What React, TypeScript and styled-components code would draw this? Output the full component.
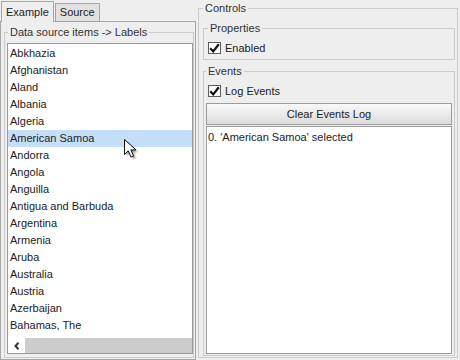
import styled, { createGlobalStyle } from "styled-components";

const countries = [
  "Abkhazia",
  "Afghanistan",
  "Aland",
  "Albania",
  "Algeria",
  "American Samoa",
  "Andorra",
  "Angola",
  "Anguilla",
  "Antigua and Barbuda",
  "Argentina",
  "Armenia",
  "Aruba",
  "Australia",
  "Austria",
  "Azerbaijan",
  "Bahamas, The",
];

const selected = "American Samoa";

const Check = () => (
  <Box>
    <svg width="11" height="10" viewBox="0 0 11 10">
      <path d="M1.2 5.2 L4.2 8.4 L9.8 1.2" fill="none" stroke="#111" strokeWidth="2.2" />
    </svg>
  </Box>
);

const App = () => {
  return (
    <>
      <GlobalStyle />
      <Frame>
        <LeftPane>
          <TabBar>
            <Tab $active>Example</Tab>
            <Tab>Source</Tab>
          </TabBar>
          <Panel>
            <Group $pad="4px 0 3px 2px" $grow>
              <Legend $shift={1}>Data source items -&gt; Labels</Legend>
              <List>
                <Rows>
                  {countries.map((c) => (
                    <Row key={c} $selected={c === selected}>
                      {c}
                    </Row>
                  ))}
                </Rows>
                <HScroll>
                  <ArrowButton>
                    <svg width="6" height="8" viewBox="0 0 6 8">
                      <path d="M4.5 0.8 L1.5 4 L4.5 7.2" fill="none" stroke="#333" strokeWidth="2" />
                    </svg>
                  </ArrowButton>
                  <Thumb />
                </HScroll>
              </List>
            </Group>
          </Panel>
        </LeftPane>

        <Controls $pad="7px 2px 1px 4px">
          <Legend>Controls</Legend>
          <Group $pad="4px 0 3px 4px">
            <Legend>Properties</Legend>
            <CheckRow>
              <Check />
              Enabled
            </CheckRow>
          </Group>
          <Events $pad="4px 2px 1px 2px" $grow>
            <Legend>Events</Legend>
            <CheckRow $indent={2}>
              <Check />
              Log Events
            </CheckRow>
            <Button>Clear Events Log</Button>
            <Log>0. 'American Samoa' selected</Log>
          </Events>
        </Controls>

        <Pointer width="16" height="22" viewBox="0 0 16 22">
          <defs>
            <filter id="sh" x="-50%" y="-50%" width="200%" height="200%">
              <feGaussianBlur stdDeviation="1.2" />
            </filter>
          </defs>
          <path d="M2.5 2.5 L2.5 17.5 L6.2 13.8 L9 20 L11.6 19 L8.9 12.9 L14 12.9 Z" fill="#000" opacity="0.45" filter="url(#sh)" />
          <path d="M0.5 0.5 L0.5 15.5 L4.2 11.8 L7 18 L9.6 17 L6.9 10.9 L12 10.9 Z" fill="#fff" stroke="#111" strokeWidth="1" strokeLinejoin="round" />
        </Pointer>
      </Frame>
    </>
  );
};

export default App;

const GlobalStyle = createGlobalStyle`
  html, body {
    margin: 0;
    padding: 0;
    background: #eeeeee;
  }
  body {
    font-family: "Liberation Sans", Arial, sans-serif;
    font-size: 11px;
    color: #222;
  }
`;

const Frame = styled.div`
  position: relative;
  display: flex;
  width: 460px;
  height: 360px;
  overflow: hidden;
  background: #eeeeee;
`;

const LeftPane = styled.div`
  width: 196px;
  flex: none;
  display: flex;
  flex-direction: column;
`;

const TabBar = styled.div`
  position: relative;
  z-index: 1;
  display: flex;
  align-items: flex-end;
  height: 21px;
  padding-left: 1px;
  gap: 1px;
`;

const Tab = styled.div<{ $active?: boolean }>`
  box-sizing: border-box;
  height: ${({ $active }) => ($active ? 21 : 18)}px;
  margin-bottom: ${({ $active }) => ($active ? -1 : 0)}px;
  padding: 0 4px;
  border: 1px solid #a6a6a6;
  border-bottom: none;
  background: ${({ $active }) => ($active ? "#eeeeee" : "#e1e1e1")};
  display: flex;
  align-items: center;
  line-height: 13px;
  color: #222;
`;

const Panel = styled.div`
  flex: 1;
  min-height: 0;
  display: flex;
  flex-direction: column;
  border: 1px solid #a6a6a6;
  padding: 4px 1px 1px 3px;
`;

const Group = styled.fieldset<{ $pad: string; $grow?: boolean }>`
  box-sizing: border-box;
  margin: 0;
  min-width: 0;
  min-height: 0;
  border: 1px solid #cbcbcb;
  padding: ${({ $pad }) => $pad};
  display: flex;
  flex-direction: column;
  flex: ${({ $grow }) => ($grow ? 1 : "none")};
`;

const Controls = styled(Group)`
  width: 260px;
  flex: none;
  margin: 2px 0 2px 2px;
`;

const Events = styled(Group)`
  margin-top: 5px;
`;

const Legend = styled.legend<{ $shift?: number }>`
  padding: 0 2px;
  margin-left: ${({ $shift }) => $shift ?? 0}px;
  line-height: 13px;
  color: #333;
`;

const List = styled.div`
  flex: 1;
  min-height: 0;
  display: flex;
  flex-direction: column;
  background: #fff;
  border: 1px solid #9a9a9a;
`;

const Rows = styled.div`
  flex: 1;
  min-height: 0;
  overflow: hidden;
  padding-top: 1px;
`;

const Row = styled.div<{ $selected?: boolean }>`
  height: 17px;
  line-height: 17px;
  padding-left: 2px;
  white-space: nowrap;
  background: ${({ $selected }) => ($selected ? "#c5dff9" : "transparent")};
`;

const HScroll = styled.div`
  flex: none;
  display: flex;
  height: 15px;
`;

const ArrowButton = styled.div`
  width: 17px;
  display: flex;
  align-items: center;
  justify-content: center;
  background: #fff;
`;

const Thumb = styled.div`
  flex: 1;
  background: #cccccc;
`;

const CheckRow = styled.label<{ $indent?: number }>`
  display: flex;
  align-items: center;
  gap: 4px;
  height: 17px;
  padding-left: ${({ $indent }) => $indent ?? 0}px;
  color: #222;
`;

const Box = styled.span`
  box-sizing: border-box;
  width: 13px;
  height: 12px;
  border: 1px solid #5c5c5c;
  background: #fff;
  display: flex;
  align-items: center;
  justify-content: center;
`;

const Button = styled.button`
  flex: none;
  height: 22px;
  margin: 4px 0 0;
  padding: 0;
  border: 1px solid #9c9c9c;
  border-radius: 0;
  background: linear-gradient(#f8f8f8, #dcdcdc);
  font: inherit;
  color: #222;
`;

const Log = styled.div`
  flex: 1;
  min-height: 0;
  margin-top: 1px;
  padding: 4px 1px 2px;
  line-height: 13px;
  background: #fff;
  border: 1px solid #9c9c9c;
`;

const Pointer = styled.svg`
  position: absolute;
  left: 124px;
  top: 139px;
  pointer-events: none;
`;
